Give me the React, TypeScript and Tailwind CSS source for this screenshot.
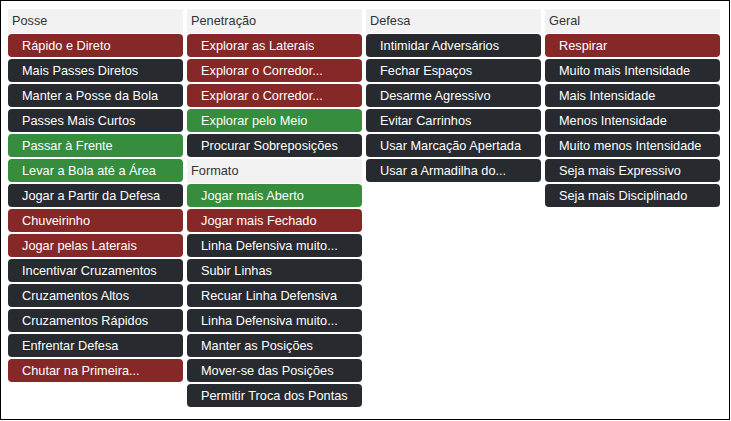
import React from "react";

type Tone = "red" | "green" | "dark";

type Item = { label: string; tone: Tone };
type Group = { title: string; items: Item[] };

const toneClass: Record<Tone, string> = {
  red: "bg-[#872828]",
  green: "bg-[#358d3d]",
  dark: "bg-[#272a2f]",
};

const r = (label: string): Item => ({ label, tone: "red" });
const g = (label: string): Item => ({ label, tone: "green" });
const d = (label: string): Item => ({ label, tone: "dark" });

const columns: Group[][] = [
  [
    {
      title: "Posse",
      items: [
        r("Rápido e Direto"),
        d("Mais Passes Diretos"),
        d("Manter a Posse da Bola"),
        d("Passes Mais Curtos"),
        g("Passar à Frente"),
        g("Levar a Bola até a Área"),
        d("Jogar a Partir da Defesa"),
        r("Chuveirinho"),
        r("Jogar pelas Laterais"),
        d("Incentivar Cruzamentos"),
        d("Cruzamentos Altos"),
        d("Cruzamentos Rápidos"),
        d("Enfrentar Defesa"),
        r("Chutar na Primeira..."),
      ],
    },
  ],
  [
    {
      title: "Penetração",
      items: [
        r("Explorar as Laterais"),
        r("Explorar o Corredor..."),
        r("Explorar o Corredor..."),
        g("Explorar pelo Meio"),
        d("Procurar Sobreposições"),
      ],
    },
    {
      title: "Formato",
      items: [
        g("Jogar mais Aberto"),
        r("Jogar mais Fechado"),
        d("Linha Defensiva muito..."),
        d("Subir Linhas"),
        d("Recuar Linha Defensiva"),
        d("Linha Defensiva muito..."),
        d("Manter as Posições"),
        d("Mover-se das Posições"),
        d("Permitir Troca dos Pontas"),
      ],
    },
  ],
  [
    {
      title: "Defesa",
      items: [
        d("Intimidar Adversários"),
        d("Fechar Espaços"),
        d("Desarme Agressivo"),
        d("Evitar Carrinhos"),
        d("Usar Marcação Apertada"),
        d("Usar a Armadilha do..."),
      ],
    },
  ],
  [
    {
      title: "Geral",
      items: [
        r("Respirar"),
        d("Muito mais Intensidade"),
        d("Mais Intensidade"),
        d("Menos Intensidade"),
        d("Muito menos Intensidade"),
        d("Seja mais Expressivo"),
        d("Seja mais Disciplinado"),
      ],
    },
  ],
];

const App = () => {
  return (
    <div
      className="w-[730px] h-[420px] border border-black bg-white pl-[7px] pt-[8px]"
      style={{ fontFamily: '"Liberation Sans", Arial, sans-serif' }}
    >
      <div className="flex gap-[4px]">
        {columns.map((groups, ci) => (
          <div key={ci} className="w-[175px] flex flex-col">
            {groups.map((group, gi) => (
              <div key={gi} className="flex flex-col">
                <div className="h-[24px] mb-px bg-[#f2f2f2] pl-[4px] flex items-center text-[12.75px] text-[#333]">
                  {group.title}
                </div>
                {group.items.map((item, ii) => (
                  <div
                    key={ii}
                    className={`h-[23px] mb-[2px] rounded-[4px] pl-[14px] flex items-center text-[12.75px] text-white whitespace-nowrap ${toneClass[item.tone]}`}
                  >
                    {item.label}
                  </div>
                ))}
              </div>
            ))}
          </div>
        ))}
      </div>
    </div>
  );
};

export default App;
